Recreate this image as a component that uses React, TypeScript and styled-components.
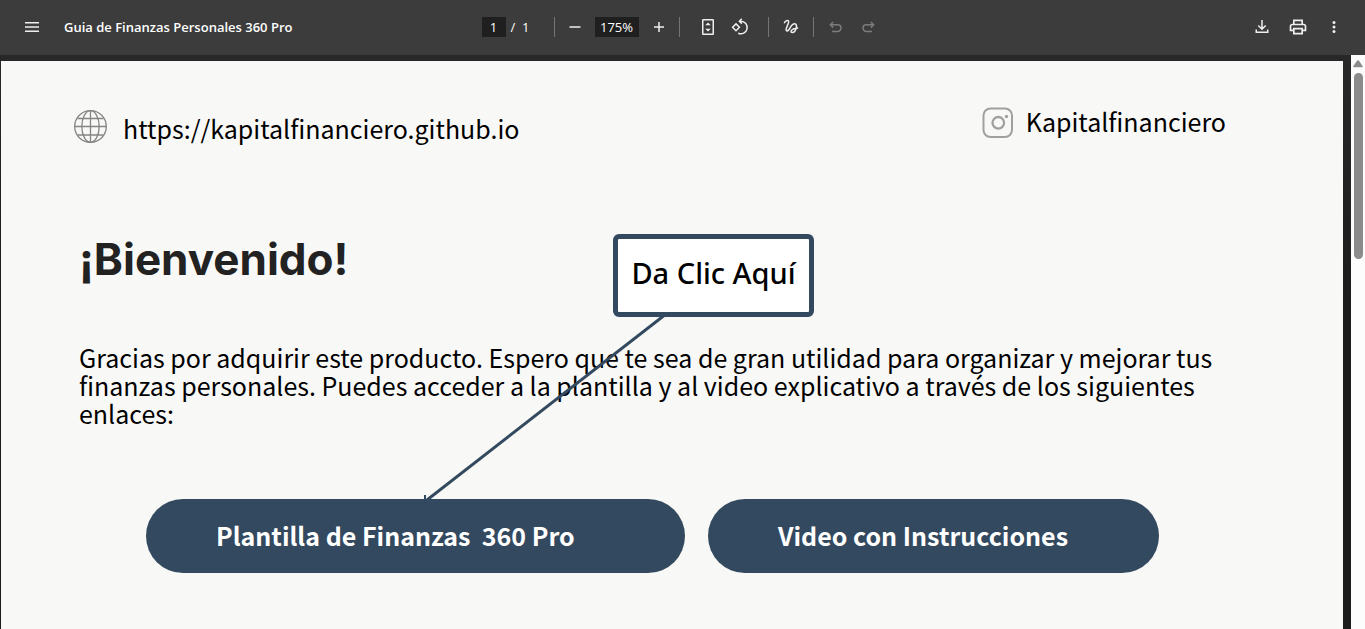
import React from "react";
import styled, { createGlobalStyle } from "styled-components";

const NAVY = "#33495f";
const UI_FONT = `"Open Sans", "Noto Sans", sans-serif`;
const DOC_FONT = `"Noto Sans CJK SC", "Noto Sans", sans-serif`;

const GlobalStyle = createGlobalStyle`
  *, *::before, *::after { box-sizing: border-box; }
  body { margin: 0; background: #282828; overflow: hidden; }
  h1, p { margin: 0; }
`;

const Viewer = styled.div`
  display: flex;
  flex-direction: column;
  height: 100vh;
`;

const Toolbar = styled.header`
  display: grid;
  grid-template-columns: 1fr auto 1fr;
  align-items: center;
  height: 55px;
  flex: none;
  padding: 0 17px 1px;
  background: #3c3c3c;
  color: #fff;
  font: 13px/20px ${UI_FONT};
`;

const TitleGroup = styled.div`
  display: flex;
  align-items: center;
  gap: 18px;
  padding-left: 1px;
`;

const FileTitle = styled.span`
  font-size: 13px;
  font-weight: 600;
  white-space: nowrap;
`;

const Controls = styled.div`
  display: flex;
  align-items: center;
  padding-right: 2px;
`;

const Group = styled.div<{ $gap: number; $pad: number; $end?: number }>`
  display: flex;
  align-items: center;
  gap: ${(p) => p.$gap}px;
  padding: 0 ${(p) => p.$end ?? p.$pad}px 0 ${(p) => p.$pad}px;
`;

const Pager = styled.div`
  display: flex;
  align-items: center;
  gap: 5px;
  width: 72px;
`;

const PageTotal = styled.span`
  white-space: pre;
`;

const Divider = styled.span`
  width: 1px;
  height: 20px;
  background: #757575;
`;

const ToolInput = styled.input<{ $width: number }>`
  width: ${(p) => p.$width}px;
  height: 20px;
  padding: 0;
  border: 0;
  background: #1f1f1f;
  color: #fff;
  font: inherit;
  text-align: center;
`;

const IconButton = styled.button`
  display: grid;
  place-items: center;
  width: 28px;
  height: 28px;
  padding: 0;
  border: 0;
  background: none;
  color: #eee;

  &:disabled {
    color: #7c7c7c;
  }
`;

const Actions = styled.div`
  display: flex;
  justify-content: flex-end;
  gap: 8px;
`;

const Body = styled.main`
  display: flex;
  flex: 1;
  min-height: 0;
`;

const Canvas = styled.div`
  flex: 1;
  overflow: hidden;
  padding: 6px 8px 0 1px;
  background: linear-gradient(#282828, #1c1c1c 240px);
`;

const Sheet = styled.article`
  position: relative;
  min-height: 100%;
  padding: 44px 117px 55px 73px;
  background: #f8f8f6;
  color: #000;
  font-family: ${DOC_FONT};
`;

const Contacts = styled.div`
  display: flex;
  justify-content: space-between;
  align-items: flex-start;
`;

const Contact = styled.a<{ $gap: number; $top: number }>`
  display: flex;
  align-items: center;
  gap: ${(p) => p.$gap}px;
  margin-top: ${(p) => p.$top}px;
  color: inherit;
  font-size: 25px;
  line-height: 32px;
  text-decoration: none;
`;

const ContactText = styled.span<{ $drop?: number; $lift?: number }>`
  padding: ${(p) => p.$drop ?? 0}px 0 ${(p) => p.$lift ?? 0}px;
`;

const Welcome = styled.h1`
  margin: 85px 0 0 5px;
  color: #222;
  font: 700 44px/60px Inter, sans-serif;
`;

const Intro = styled.p`
  margin: 54px 0 0 5px;
  font-size: 25px;
  line-height: 28px;
`;

const Links = styled.nav`
  display: flex;
  gap: 23px;
  margin: 72px 67px 0 72px;
`;

const PillLink = styled.a<{ $grow: number }>`
  flex: ${(p) => p.$grow} 1 0;
  padding: 0 0 2px 70px;
  border-radius: 37px;
  background: ${NAVY};
  color: #fff;
  font-size: 25px;
  font-weight: 700;
  line-height: 72px;
  text-decoration: none;
  white-space: pre;
`;

const Callout = styled.div`
  position: absolute;
  top: 173px;
  left: 612px;
  width: 201px;
  padding: 18px 0 23px;
  border: 5px solid ${NAVY};
  border-radius: 6px;
  background: #fff;
  font: 500 29px/32px "Noto Sans", sans-serif;
  text-align: center;
  white-space: nowrap;
`;

const Leader = styled.svg`
  position: absolute;
  top: 252px;
  left: 419px;
  pointer-events: none;
`;

const ScrollTrack = styled.div`
  display: flex;
  flex-direction: column;
  align-items: center;
  gap: 5px;
  width: 14px;
  padding-top: 5px;
  background: #fcfcfc;
`;

const ScrollThumb = styled.div`
  width: 9px;
  height: 186px;
  border-radius: 5px;
  background: #8b8b8b;
`;

const MaterialIcon = ({ d, size = 20 }: { d: string; size?: number }) => (
  <svg width={size} height={size} viewBox="0 0 24 24" fill="currentColor" aria-hidden="true">
    <path d={d} />
  </svg>
);

const LineIcon = ({ children }: { children: React.ReactNode }) => (
  <svg width="20" height="20" viewBox="0 0 20 20" fill="none" stroke="currentColor" strokeWidth="1.5" aria-hidden="true">
    {children}
  </svg>
);

const UndoShape = () => <path d="M7.2 5 4.4 7.800l2.800 2.800M4.600 7.800h7.100a3.300 3.300 0 0 1 0 6.600H6" />;

export default function App() {
  return (
    <Viewer>
      <GlobalStyle />
      <Toolbar>
        <TitleGroup>
          <IconButton aria-label="Menu">
            <LineIcon><path d="M3 5.75h14M3 10h14M3 14.25h14" /></LineIcon>
          </IconButton>
          <FileTitle>Guia de Finanzas Personales 360 Pro</FileTitle>
        </TitleGroup>
        <Controls>
          <Pager>
            <ToolInput $width={24} aria-label="Página" defaultValue="1" />
            <PageTotal>/  1</PageTotal>
          </Pager>
          <Divider />
          <Group $gap={6} $pad={6}>
            <IconButton aria-label="Reducir">
              <LineIcon><path d="M4.5 10h11" /></LineIcon>
            </IconButton>
            <ToolInput $width={44} aria-label="Zoom" defaultValue="175%" />
            <IconButton aria-label="Ampliar">
              <LineIcon><path d="M5 10h10M10 5v10" /></LineIcon>
            </IconButton>
          </Group>
          <Divider />
          <Group $gap={4} $pad={14}>
            <IconButton aria-label="Ajustar a la página">
              <LineIcon>
                <rect x="4.75" y="2.75" width="10.5" height="14.5" rx="0.5" />
                <path d="M7.2 8.3 10 5.5l2.8 2.8zM7.2 11.7l2.8 2.8 2.8-2.8z" fill="currentColor" stroke="none" />
              </LineIcon>
            </IconButton>
            <IconButton aria-label="Girar">
              <LineIcon>
                <path d="M6 6.9 9.4 10.3 6 13.7 2.6 10.3z" />
                <path d="M11.8 1.8 9.4 4.2l2.4 2.4M9.8 4.2h1a6.3 6.3 0 1 1-2.6 12" />
              </LineIcon>
            </IconButton>
          </Group>
          <Divider />
          <Group $gap={0} $pad={8}>
            <IconButton aria-label="Dibujar">
              <LineIcon>
                <path d="M3.200 6.200C4.200 4 6.200 2.900 7.300 3.700c1.900 1.600-3.200 7.200-2 9.700 1 1.900 3-.9 4.200-3.200 1.300-2.500 3.200-4.200 4.900-3.300 2.500 1.500.2 8.600-2.900 8.700-2.900-.1-1.800-4.200 5.700-4.600" />
              </LineIcon>
            </IconButton>
          </Group>
          <Divider />
          <Group $gap={4} $pad={8} $end={0}>
            <IconButton aria-label="Deshacer" disabled>
              <LineIcon><UndoShape /></LineIcon>
            </IconButton>
            <IconButton aria-label="Rehacer" disabled>
              <LineIcon><g transform="matrix(-1 0 0 1 20 0)"><UndoShape /></g></LineIcon>
            </IconButton>
          </Group>
        </Controls>
        <Actions>
          <IconButton aria-label="Descargar">
            <LineIcon><path d="M10 3v9M6.300 8.500 10 12.200l3.700-3.700M4.250 12.500v2.750h11.500V12.500" /></LineIcon>
          </IconButton>
          <IconButton aria-label="Imprimir">
            <MaterialIcon d="M19 8h-1V3H6v5H5c-1.660 0-3 1.340-3 3v6h4v4h12v-4h4v-6c0-1.660-1.340-3-3-3zM8 5h8v3H8V5zm8 12v2H8v-4h8v2zm2-2v-2H6v2H4v-4c0-.55.45-1 1-1h14c.55 0 1 .45 1 1v4h-2z" />
          </IconButton>
          <IconButton aria-label="Más acciones">
            <LineIcon>
              <g fill="currentColor" stroke="none">
                <circle cx="10" cy="5.5" r="1.5" /><circle cx="10" cy="10" r="1.5" /><circle cx="10" cy="14.5" r="1.5" />
              </g>
            </LineIcon>
          </IconButton>
        </Actions>
      </Toolbar>
      <Body>
        <Canvas>
          <Sheet>
            <Contacts>
              <Contact href="https://kapitalfinanciero.github.io" $gap={15} $top={5}>
                <svg width="34" height="34" viewBox="0 0 34 34" fill="none" stroke="#858585" strokeWidth="1.3" aria-hidden="true">
                  <circle cx="16.5" cy="16.5" r="15.8" />
                  <ellipse cx="16.5" cy="16.5" rx="8.7" ry="15.8" />
                  <path d="M16.500.7v31.600M.7 16.500h31.600M3.500 8.500h26M3.500 25h26" />
                </svg>
                <ContactText $drop={2}>https://kapitalfinanciero.github.io</ContactText>
              </Contact>
              <Contact href="#instagram" $gap={12} $top={0}>
                <svg width="32" height="32" viewBox="0 0 32 32" fill="none" stroke="#a0a0a0" strokeWidth="2" aria-hidden="true">
                  <rect x="1.500" y="2.500" width="28.500" height="28.500" rx="7" />
                  <circle cx="16.300" cy="16.800" r="5.800" strokeWidth="2.300" />
                  <circle cx="24.500" cy="10.500" r="1.700" fill="#a0a0a0" stroke="none" />
                </svg>
                <ContactText $lift={2}>Kapitalfinanciero</ContactText>
              </Contact>
            </Contacts>
            <Welcome>¡Bienvenido!</Welcome>
            <Intro>
              Gracias por adquirir este producto. Espero que te sea de gran utilidad para organizar y mejorar tus
              finanzas personales. Puedes acceder a la plantilla y al video explicativo a través de los siguientes
              enlaces:
            </Intro>
            <Links>
              <PillLink href="#plantilla" $grow={469}>{"Plantilla de Finanzas  360 Pro"}</PillLink>
              <PillLink href="#video" $grow={381}>Video con Instrucciones</PillLink>
            </Links>
            <Leader width="250" height="188" viewBox="0 0 250 188" fill="none" stroke={NAVY} strokeWidth="3" aria-hidden="true">
              <path d="M246 1 7 187" />
              <path d="M5 182v5h5" strokeWidth="2" />
            </Leader>
            <Callout>Da Clic Aquí</Callout>
          </Sheet>
        </Canvas>
        <ScrollTrack>
          <svg width="10" height="8" viewBox="0 0 10 8" fill="#8b8b8b" aria-hidden="true">
            <path d="M4.200.6Q5-.3 5.800.6L9.600 6Q10 7.200 9 7.300H1Q0 7.200.4 6z" />
          </svg>
          <ScrollThumb />
        </ScrollTrack>
      </Body>
    </Viewer>
  );
}
